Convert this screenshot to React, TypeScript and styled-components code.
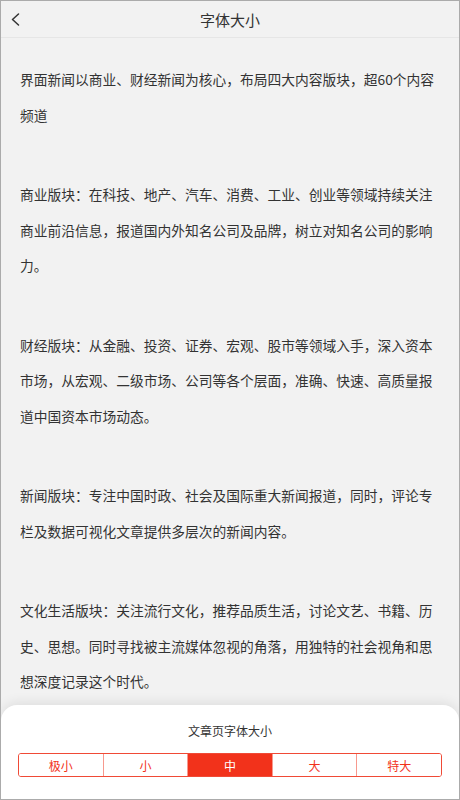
import React, { FC, useState } from "react";
import styled, { createGlobalStyle } from "styled-components";

const COLORS = {
  page: "#f2f2f2",
  frame: "#ababab",
  divider: "#e6e6e6",
  text: "#333333",
  white: "#ffffff",
  red: "#f2321b",
  redBorder: "#f04a36",
  redLine: "#f7998e",
};

const PARAGRAPHS = [
  "界面新闻以商业、财经新闻为核心，布局四大内容版块，超60个内容频道",
  "商业版块：在科技、地产、汽车、消费、工业、创业等领域持续关注商业前沿信息，报道国内外知名公司及品牌，树立对知名公司的影响力。",
  "财经版块：从金融、投资、证券、宏观、股市等领域入手，深入资本市场，从宏观、二级市场、公司等各个层面，准确、快速、高质量报道中国资本市场动态。",
  "新闻版块：专注中国时政、社会及国际重大新闻报道，同时，评论专栏及数据可视化文章提供多层次的新闻内容。",
  "文化生活版块：关注流行文化，推荐品质生活，讨论文艺、书籍、历史、思想。同时寻找被主流媒体忽视的角落，用独特的社会视角和思想深度记录这个时代。",
];

const SIZES = ["极小", "小", "中", "大", "特大"];

const GlobalStyle = createGlobalStyle`
  body {
    margin: 0;
    font-family: "Noto Sans CJK SC", "Noto Sans", sans-serif;
    color: ${COLORS.text};
  }
`;

export default function App() {
  const [sizeIndex, setSizeIndex] = useState(2);

  return (
    <>
      <GlobalStyle />
      <Root>
        <Header>
          <BackButton aria-label="back">
            <svg width="9" height="13" viewBox="0 0 9 13">
              <polyline
                points="7.5,1 1.5,6.5 7.5,12"
                fill="none"
                stroke={COLORS.text}
                strokeWidth="1.5"
                strokeLinecap="round"
                strokeLinejoin="round"
              />
            </svg>
          </BackButton>
          <Title>字体大小</Title>
          <span />
        </Header>
        <Article>
          {PARAGRAPHS.map((text) => (
            <Paragraph key={text}>{text}</Paragraph>
          ))}
        </Article>
        <FontSheet sizeIndex={sizeIndex} onChange={setSizeIndex} />
      </Root>
    </>
  );
}

type PropsFontSheet = {
  sizeIndex: number;
  onChange: (index: number) => void;
};

const FontSheet: FC<PropsFontSheet> = ({ sizeIndex, onChange }) => {
  return (
    <Sheet>
      <SheetTitle>文章页字体大小</SheetTitle>
      <Segments>
        {SIZES.map((label, index) => (
          <Segment
            key={label}
            $active={index === sizeIndex}
            onClick={() => onChange(index)}
          >
            {label}
          </Segment>
        ))}
      </Segments>
    </Sheet>
  );
};

const Root = styled.div`
  position: relative;
  width: 460px;
  height: 800px;
  box-sizing: border-box;
  border: 1px solid ${COLORS.frame};
  background-color: ${COLORS.page};
  overflow: hidden;
`;

const Header = styled.div`
  display: grid;
  grid-template-columns: 40px 1fr 40px;
  align-items: center;
  height: 37px;
  box-sizing: border-box;
  border-bottom: 1px solid ${COLORS.divider};
`;

const BackButton = styled.button`
  display: flex;
  align-items: center;
  padding: 0 0 0 10px;
  height: 100%;
  border: none;
  background: none;
  cursor: pointer;
`;

const Title = styled.h1`
  margin: 0;
  text-align: center;
  font-size: 15px;
  font-weight: 400;
  color: ${COLORS.text};
`;

const Article = styled.div`
  padding: 24px 19px 0 19px;
`;

const Paragraph = styled.p`
  margin: 0 0 44px;
  font-size: 13.75px;
  line-height: 35.5px;
  color: ${COLORS.text};
`;

const Sheet = styled.div`
  position: absolute;
  left: 0;
  right: 0;
  bottom: 0;
  height: 94px;
  box-sizing: border-box;
  padding: 18px 17px 0;
  background-color: ${COLORS.white};
  border-radius: 16px 16px 0 0;
  box-shadow: 0 -3px 12px rgba(0, 0, 0, 0.08);
`;

const SheetTitle = styled.div`
  text-align: center;
  font-size: 12px;
  line-height: 16px;
  color: ${COLORS.text};
  margin-bottom: 14px;
`;

const Segments = styled.div`
  display: flex;
  height: 24px;
  box-sizing: border-box;
  border: 1px solid ${COLORS.redBorder};
  border-radius: 3px;
  overflow: hidden;
`;

const Segment = styled.div<{ $active: boolean }>`
  flex: 1;
  display: flex;
  align-items: center;
  justify-content: center;
  font-size: 12px;
  cursor: pointer;
  color: ${({ $active }) => ($active ? COLORS.white : COLORS.red)};
  background-color: ${({ $active }) => ($active ? COLORS.red : COLORS.white)};
  border-right: 1px solid ${COLORS.redLine};
  &:last-child {
    border-right: none;
  }
`;
